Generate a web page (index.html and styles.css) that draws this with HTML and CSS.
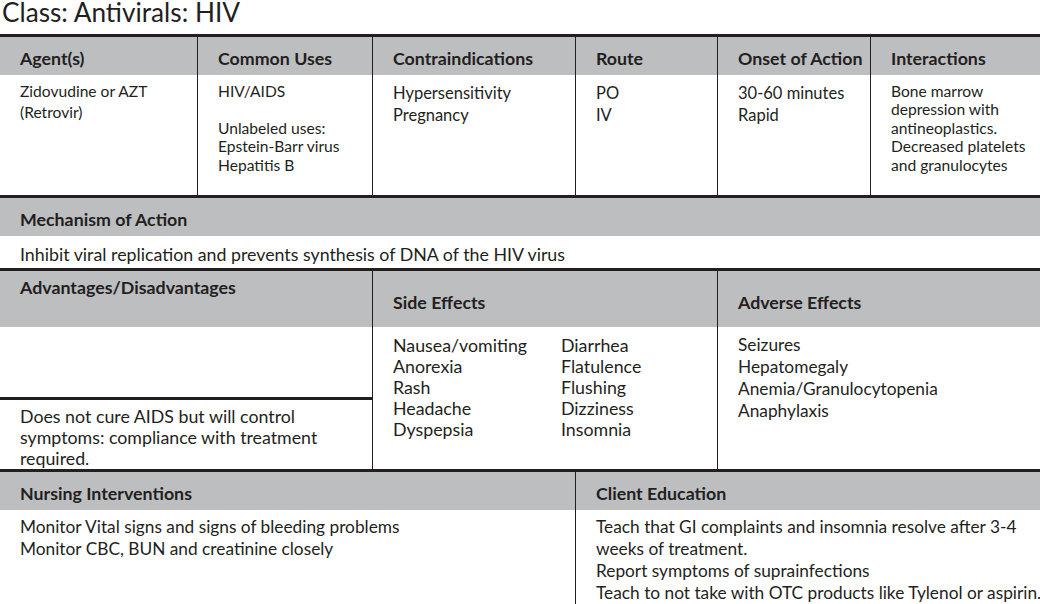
FILE: index.html
```html
<!DOCTYPE html>
<html lang="en">
<head>
<meta charset="utf-8">
<title>Class: Antivirals: HIV</title>
<link rel="stylesheet" href="styles.css">
</head>
<body>
<h1 class="title">Class: Antivirals: HIV</h1>
<div class="sheet">
  <section class="grid info">
    <div class="hd">Agent(s)</div>
    <div class="hd">Common Uses</div>
    <div class="hd">Contraindications</div>
    <div class="hd">Route</div>
    <div class="hd">Onset of Action</div>
    <div class="hd">Interactions</div>
    <div class="cell sm">Zidovudine or AZT<br>(Retrovir)</div>
    <div class="cell sm tight">HIV/AIDS<br><br>Unlabeled uses:<br>Epstein-Barr virus<br>Hepatitis B</div>
    <div class="cell">Hypersensitivity<br>Pregnancy</div>
    <div class="cell">PO<br>IV</div>
    <div class="cell">30-60 minutes<br>Rapid</div>
    <div class="cell sm tight">Bone marrow<br>depression with<br>antineoplastics.<br>Decreased platelets<br>and granulocytes</div>
  </section>

  <section class="mech">
    <div class="hd">Mechanism of Action</div>
    <div class="mech-body">Inhibit viral replication and prevents synthesis of DNA of the HIV virus</div>
  </section>

  <section class="grid effects">
    <div class="col">
      <div class="hd tall top">Advantages/Disadvantages</div>
      <div class="adv-blank"></div>
      <div class="adv-text">Does not cure AIDS but will control<br>symptoms: compliance with treatment<br>required.</div>
    </div>
    <div class="col">
      <div class="hd tall mid">Side Effects</div>
      <div class="side-body">
        <ul class="list">
          <li>Nausea/vomiting</li>
          <li>Anorexia</li>
          <li>Rash</li>
          <li>Headache</li>
          <li>Dyspepsia</li>
        </ul>
        <ul class="list">
          <li>Diarrhea</li>
          <li>Flatulence</li>
          <li>Flushing</li>
          <li>Dizziness</li>
          <li>Insomnia</li>
        </ul>
      </div>
    </div>
    <div class="col">
      <div class="hd tall mid">Adverse Effects</div>
      <ul class="list adverse">
        <li>Seizures</li>
        <li>Hepatomegaly</li>
        <li>Anemia/Granulocytopenia</li>
        <li>Anaphylaxis</li>
      </ul>
    </div>
  </section>

  <section class="grid bottom">
    <div class="col">
      <div class="hd">Nursing Interventions</div>
      <div class="text-body">Monitor Vital signs and signs of bleeding problems<br>Monitor CBC, BUN and creatinine closely</div>
    </div>
    <div class="col">
      <div class="hd">Client Education</div>
      <div class="text-body">Teach that GI complaints and insomnia resolve after 3-4<br>weeks of treatment.<br>Report symptoms of suprainfections<br>Teach to not take with OTC products like Tylenol or aspirin.</div>
    </div>
  </section>
</div>
</body>
</html>
```

FILE: styles.css
```css
html, body {
  margin: 0;
  padding: 0;
  overflow: hidden;
}

body {
  width: 1040px;
  background: #ffffff;
  color: #231f20;
  font-family: Lato, "Noto Sans", sans-serif;
}

.title {
  margin: 0;
  height: 34px;
  padding-left: 2px;
  font-size: 26.2px;
  font-weight: 400;
  line-height: 25px;
}

.sheet {
  border-top: 3px solid #231f20;
}

.grid {
  display: grid;
  column-gap: 1px;
  background: #231f20;
}

.hd {
  display: flex;
  align-items: center;
  height: 38px;
  box-sizing: border-box;
  padding: 3px 0 0 20px;
  background: #bdbec0;
  font-size: 17.8px;
  font-weight: 700;
  white-space: nowrap;
}

/* top table */
.info {
  grid-template-columns: 197px 174px 202px 141px 152px 1fr;
  grid-template-rows: 38px 120px;
}

.cell {
  background: #ffffff;
  padding: 6.5px 0 0 20px;
  font-size: 16.5px;
  line-height: 22px;
  white-space: nowrap;
}

.cell.sm {
  font-size: 15.6px;
  padding-top: 6px;
  line-height: 21px;
}

.cell.tight {
  padding-top: 7px;
  line-height: 18.4px;
}

/* mechanism */
.mech {
  border-top: 3px solid #231f20;
}

.mech-body {
  height: 32px;
  box-sizing: border-box;
  padding: 6.5px 0 0 20px;
  font-size: 17.8px;
  line-height: 22px;
  white-space: nowrap;
}

/* effects */
.effects {
  border-top: 3px solid #231f20;
  grid-template-columns: 372px 344px 1fr;
  height: 197px;
}

.col {
  display: flex;
  flex-direction: column;
  background: #ffffff;
}

.hd.tall {
  height: 56px;
  align-items: flex-start;
  line-height: 22px;
}

.hd.top {
  padding-top: 4.5px;
}

.hd.mid {
  padding-top: 19.5px;
}

.adv-blank {
  height: 70px;
}

.adv-text {
  flex: 1;
  border-top: 3px solid #231f20;
  padding: 6px 0 0 20px;
  font-size: 17.8px;
  line-height: 21px;
  white-space: nowrap;
}

.side-body {
  display: grid;
  grid-template-columns: 168px 1fr;
  padding: 8px 0 0 20px;
}

.list {
  margin: 0;
  padding: 0;
  list-style: none;
  font-size: 17.8px;
  line-height: 21px;
  white-space: nowrap;
}

.list.adverse {
  padding: 7px 0 0 20px;
  font-size: 17.3px;
  line-height: 22px;
}

/* bottom */
.bottom {
  border-top: 4px solid #231f20;
  grid-template-columns: 575px 1fr;
}

.text-body {
  min-height: 100px;
  padding: 6px 0 0 20px;
  font-size: 17.3px;
  line-height: 22px;
  white-space: nowrap;
}
```
